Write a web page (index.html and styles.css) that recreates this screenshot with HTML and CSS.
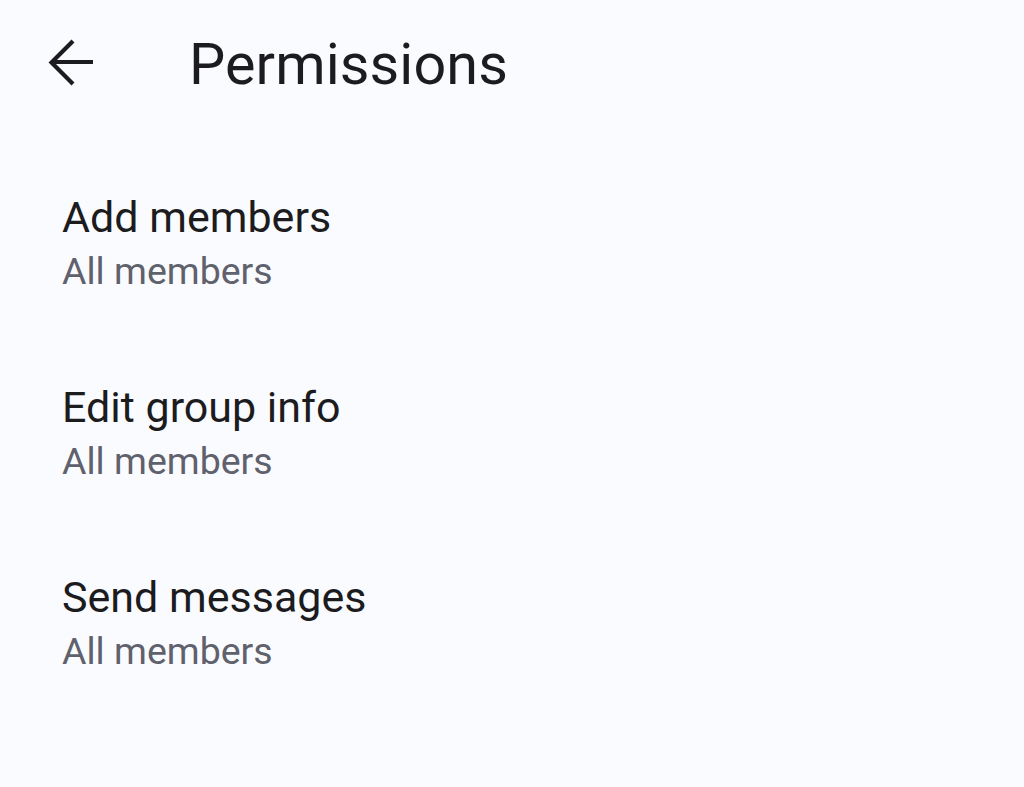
FILE: index.html
```html
<!DOCTYPE html>
<html lang="en">
<head>
<meta charset="utf-8">
<title>Permissions</title>
<link rel="stylesheet" href="styles.css">
</head>
<body>
<div class="screen">
  <header class="topbar">
    <div class="back" aria-label="Back">
      <svg width="64" height="64" viewBox="0 0 64 64">
        <path d="M53 32H11M33 11L11.5 32.5L33 54" fill="none" stroke="#1c1c1e" stroke-width="4.2"/>
      </svg>
    </div>
    <h1 class="title">Permissions</h1>
  </header>
  <ul class="list">
    <li class="row">
      <div class="row-title">Add members</div>
      <div class="row-sub">All members</div>
    </li>
    <li class="row">
      <div class="row-title">Edit group info</div>
      <div class="row-sub">All members</div>
    </li>
    <li class="row">
      <div class="row-title">Send messages</div>
      <div class="row-sub">All members</div>
    </li>
  </ul>
</div>
</body>
</html>
```
FILE: styles.css
```css
html, body {
  margin: 0;
  padding: 0;
  background: #fafbfe;
}
body {
  font-family: Roboto, "Noto Sans", sans-serif;
  color: #1c1c1e;
}
.screen {
  width: 1024px;
  height: 787px;
  overflow: hidden;
}
.topbar {
  display: flex;
  align-items: flex-start;
  height: 119px;
  padding: 30px 0 0 40px;
}
.back {
  width: 64px;
  height: 64px;
}
.back svg {
  display: block;
}
.title {
  margin: 1px 0 0 85px;
  font-size: 57.5px;
  font-weight: 400;
  line-height: 68px;
  letter-spacing: 0.1px;
  color: #1c1c1e;
}
.list {
  list-style: none;
  margin: 0;
  padding: 0;
}
.row {
  padding: 43px 0 41px 62px;
}
.row-title {
  font-size: 43px;
  line-height: 50px;
  color: #1c1c1e;
}
.row-sub {
  margin-top: 2px;
  font-size: 37.5px;
  line-height: 54px;
  color: #5f616d;
}
```
